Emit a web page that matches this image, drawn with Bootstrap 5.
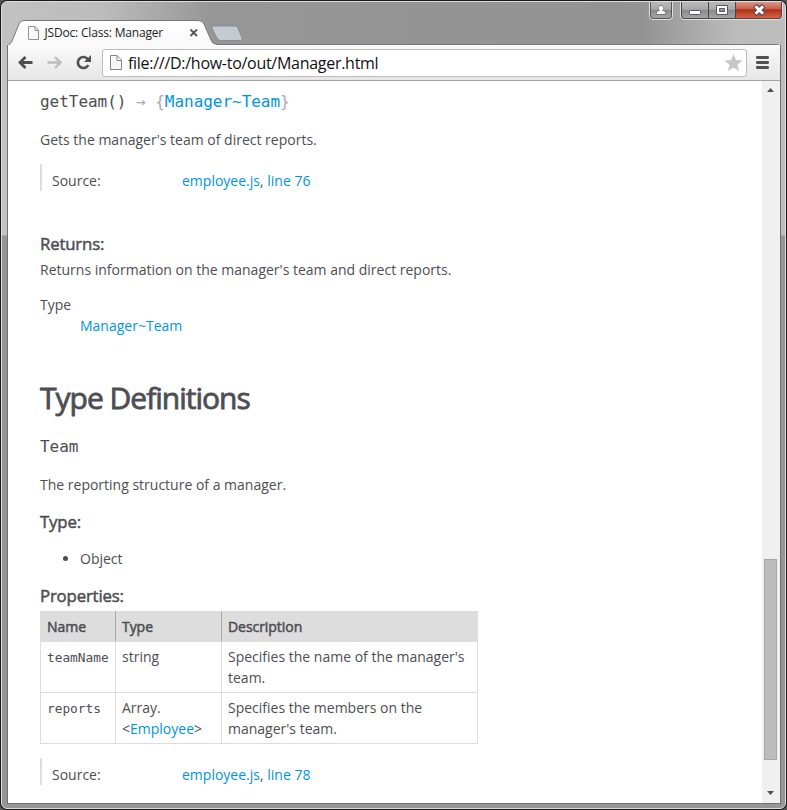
<!DOCTYPE html>
<html lang="en">
<head>
<meta charset="utf-8">
<title>JSDoc: Class: Manager</title>
<link rel="stylesheet" href="https://cdn.jsdelivr.net/npm/bootstrap@5.3.0/dist/css/bootstrap.min.css">
<style>
body{width:787px;height:810px;background:#555;overflow:hidden}
.win{height:810px;padding:1px;border-radius:7px;background:#1c191a}
.frame{height:808px;border:1px solid #ddd;border-radius:6px;overflow:hidden;background:linear-gradient(90deg,#c2c2c2 0,#bcbcbc 100px,#969696 210px,#939393 640px,#bcbcbc 735px,#bdbdbd)}
.sides{height:806px;background:linear-gradient(#0000 233px,#969696 234px)}
.titlebar{height:43px}
.tabtitle{left:42.5px;top:22px;font:12px/18px "Open Sans",sans-serif;letter-spacing:-.18px;color:#222;white-space:nowrap}
.pane{margin:0 4px 0 5px;height:759px;border:1px solid #6f7070;border-top:0;background:#fff}
.toolbar{height:36px;background:linear-gradient(#fafafa,#e6e6e6);border-bottom:1px solid #a3a3a3}
.address{width:645px;height:28px;border:1px solid #bcbcbc;border-radius:3px;background:#fff;font:16px/24px "Open Sans",sans-serif;color:#111}
.url{letter-spacing:-.28px}
.doc{font:14px/21px "Open Sans",sans-serif;color:#4d4e53;padding:10px 0 0 32px;height:722px;overflow:hidden}
.doc a{color:#0095dd;text-decoration:none}
.doc p{margin:0}
.doc p.gap{margin-top:14px}
.doc h2,.doc h5,.doc th{font-weight:400;-webkit-text-stroke:.5px #4d4e53;margin:0}
.doc h2{font-size:30px;line-height:36px;letter-spacing:-1px;-webkit-text-stroke-width:.8px;margin:44px 0 20px}
.doc h5{font-size:16.8px;line-height:22px;letter-spacing:-.17px;margin-bottom:4px}
.doc h5.returns{margin-top:42px}
.doc h4{font:16px/22px "DejaVu Sans Mono",monospace;letter-spacing:-.03px;margin:0}
.doc ul{margin:15px 0 16px;padding-left:40px}
.sig{color:#aaa}
.src{height:27px;border-left:2px solid #ddd;padding:6px 0 0 10px;margin-top:14px}
.src span{width:130px}
.props{width:438px;border-collapse:collapse;table-layout:fixed}
.props th,.props td{border:1px solid #ddd;padding:4px 6px;vertical-align:top}
.props th{background:#ddd;border-right-color:#aaa;letter-spacing:-.05px}
.props th:last-child{border-right-color:#ddd}
.props code{font:12.8px/21px "DejaVu Sans Mono",monospace;color:#4d4e53}
.bar{width:18px;background:#f0f0f0;padding-left:2px}
.thumb{width:13px;height:201px;background:#bcbcbc;border:1px solid #a6a6a6;margin-top:462px}
</style>
</head>
<body>
<div class="win"><div class="frame"><div class="sides">
  <div class="titlebar position-relative">
    <svg class="d-block" width="783" height="43" viewBox="2 2 783 43">
      <defs>
        <linearGradient id="tg" x2="0" y2="1"><stop stop-color="#fff"/><stop offset="1" stop-color="#f8f8f8"/></linearGradient>
        <linearGradient id="cg" x2="0" y2="1"><stop stop-color="#bbb"/><stop offset=".45" stop-color="#a9a9a9"/><stop offset=".5" stop-color="#8a8a8a"/><stop offset="1" stop-color="#aaa"/></linearGradient>
        <linearGradient id="rg" x2="0" y2="1"><stop stop-color="#dda092"/><stop offset=".45" stop-color="#c75d48"/><stop offset=".5" stop-color="#b03018"/><stop offset="1" stop-color="#d4684a"/></linearGradient>
      </defs>
      <path d="M7.500 50V46Q11 44 12 41L19 24Q20 20.500 24 20.500H198Q203 20.500 204 24L211 40Q212 44 217 44.500H777Q780.500 44.500 780.500 48V50Z" fill="url(#tg)" stroke="#777"/>
      <path d="M214 26H235Q237 26 238 28L242 38Q243 40.500 240 40.500H221Q218 40.500 217 38L212 28Q211 26 214 26Z" fill="#c6cbd2" stroke="#888e96"/>
      <path d="M28.500 26.500H35L38.500 30V39.500H28.500ZM35 26.500V30.500H38.500" fill="#fafafa" stroke="#909090"/>
      <path d="M190.500 29.500L197 36M197 29.500L190.500 36" stroke="#555" stroke-width="1.800"/>
      <path d="M649.500 1V15Q649.500 19.500 653 19.500H669Q672.500 19.500 672.500 15V1" fill="url(#cg)" stroke="#e0e0e0"/>
      <path d="M650.500 1V15Q650.500 18.500 653 18.500H669Q671.500 18.500 671.500 15V1" fill="none" stroke="#555"/>
      <path d="M680.500 1V15Q680.500 19.500 684 19.500H779Q782.500 19.500 782.500 15V1" fill="url(#cg)" stroke="#e0e0e0"/>
      <path d="M736 1V18.500H779Q781.500 18.500 781.500 15V1" fill="url(#rg)"/>
      <path d="M681.500 1V15Q681.500 18.500 684 18.500H779Q781.500 18.500 781.500 15V1M708.500 1V18M735.500 1V18" fill="none" stroke="#4c4446"/>
      <path d="M656.500 14.500V12.500Q657 10.500 659.500 10.500C657 8 658.500 5.500 661 5.500C663.500 5.500 665 8 662.500 10.500Q665.500 10.500 665.500 12.500V14.500Z" fill="#fff" stroke="#777"/>
      <rect x="689.500" y="10.500" width="11" height="4" rx="1" fill="#fff" stroke="#555868"/>
      <path d="M716.500 5.500H727.500V14.500H716.500ZM719.500 8.500V11.500H724.500V8.500Z" fill="#fff" fill-rule="evenodd" stroke="#555868"/>
      <path d="M755 5.500L763.500 14.500M763.500 5.500L755 14.500" stroke="#4a4554" stroke-width="4.800"/>
      <path d="M755.500 6.300L763 13.700M763 6.300L755.500 13.700" stroke="#fff" stroke-width="3"/>
    </svg>
    <div class="tabtitle position-absolute">JSDoc: Class: Manager</div>
  </div>
  <div class="pane">
    <div class="toolbar d-flex align-items-center">
      <svg width="94" height="35" viewBox="8 45 94 35" fill="none">
        <path d="M32.500 62.500H20M25.500 57L20 62.500L25.500 68" stroke="#505050" stroke-width="2.800"/>
        <path d="M47.500 62.500H60M55 57L60.500 62.500L55 68" stroke="#bdbdbd" stroke-width="2.400"/>
        <path d="M88 59.500A5.500 5.500 0 1 0 88.300 65" stroke="#505050" stroke-width="2.600"/><path d="M91 55V62H84Z" fill="#505050"/>
      </svg>
      <div class="address d-flex align-items-center">
        <svg width="25" height="26" viewBox="103 50 25 26"><path d="M110.500 55.500H117L121.500 60V69.500H110.500ZM117 55.500V60.500H121.500" fill="#f7f7f7" stroke="#858585"/></svg>
        <span class="url flex-grow-1">file:///D:/how-to/out/Manager.html</span>
        <svg width="24" height="26" viewBox="722 50 24 26"><path d="M733.500 54L736 60L742.500 60.500L737.500 64.700L739 71L733.500 67.500L728 71L729.500 64.700L724.500 60.500L731 60Z" fill="#c8c8c8"/></svg>
      </div>
      <svg width="32" height="35" viewBox="747 45 32 35"><path d="M757.300 57.500H767.700M757.300 62.500H767.700M757.300 67.500H767.700" stroke="#505050" stroke-width="2.800" stroke-linecap="round"/></svg>
    </div>
    <div class="d-flex">
      <main class="doc flex-grow-1">
        <h4>getTeam() <span class="sig">→ {<a href="#">Manager~Team</a>}</span></h4>
        <p class="mt-3">Gets the manager's team of direct reports.</p>
        <div class="src d-flex"><span>Source:</span><div><a href="#">employee.js</a>, <a href="#">line 76</a></div></div>
        <h5 class="returns">Returns:</h5>
        <p>Returns information on the manager's team and direct reports.</p>
        <p class="gap">Type</p>
        <p class="ms-4 ps-3"><a href="#">Manager~Team</a></p>
        <h2>Type Definitions</h2>
        <h4>Team</h4>
        <p class="mt-3">The reporting structure of a manager.</p>
        <h5 class="mt-3">Type:</h5>
        <ul><li>Object</li></ul>
        <h5>Properties:</h5>
        <table class="props">
          <colgroup><col style="width:75px"><col style="width:106px"><col></colgroup>
          <tr><th>Name</th><th>Type</th><th>Description</th></tr>
          <tr><td><code>teamName</code></td><td>string</td><td>Specifies the name of the manager's team.</td></tr>
          <tr><td><code>reports</code></td><td>Array.<br>&lt;<a href="#">Employee</a>&gt;</td><td>Specifies the members on the manager's team.</td></tr>
        </table>
        <div class="src d-flex"><span>Source:</span><div><a href="#">employee.js</a>, <a href="#">line 78</a></div></div>
      </main>
      <div class="bar d-flex flex-column">
        <svg width="13" height="16" viewBox="764 81 13 16"><path d="M767 92L770.500 88L774 92Z" fill="#505050"/></svg>
        <div class="thumb"></div>
        <svg class="mt-auto" width="13" height="16" viewBox="764 787 13 16"><path d="M767 791L770.500 795L774 791Z" fill="#505050"/></svg>
      </div>
    </div>
  </div>
</div></div></div>
<script src="https://cdn.jsdelivr.net/npm/bootstrap@5.3.0/dist/js/bootstrap.bundle.min.js"></script>
</body>
</html>
